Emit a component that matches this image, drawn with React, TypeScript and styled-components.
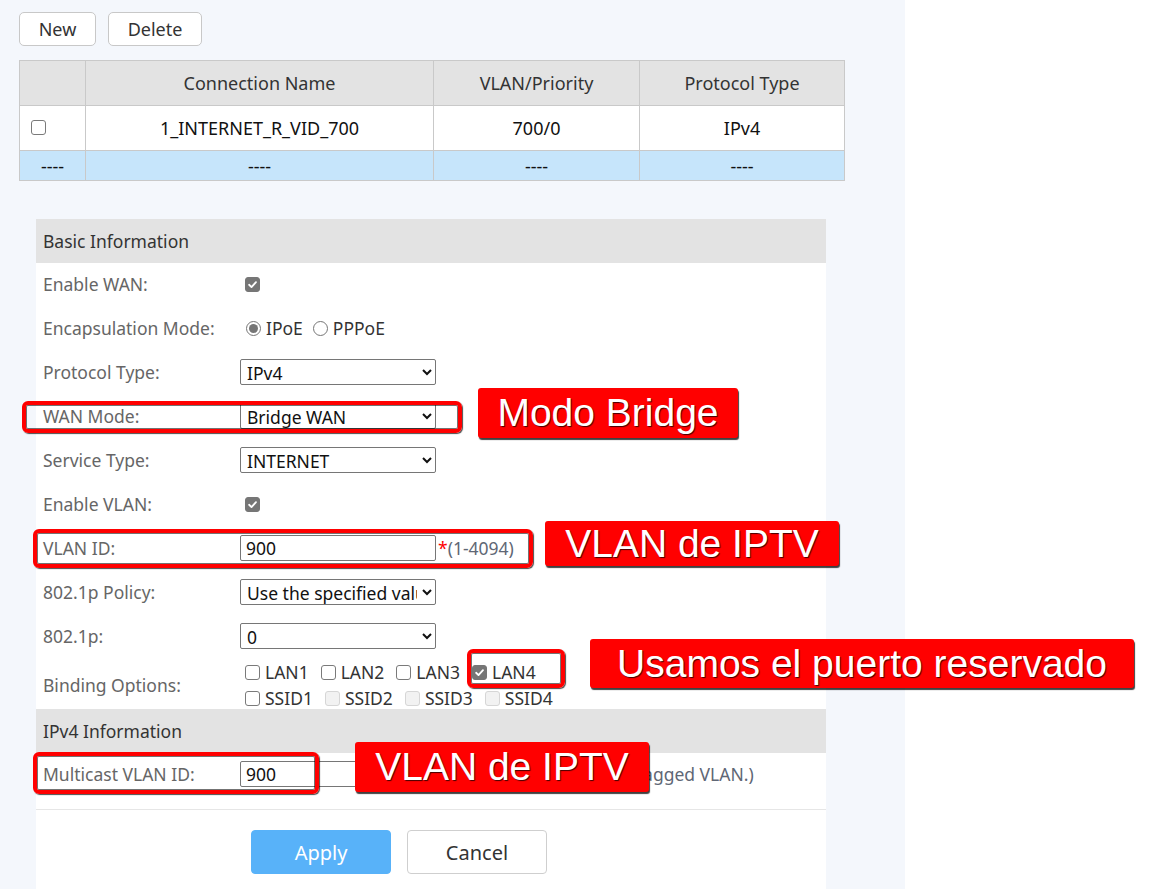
import styled, { createGlobalStyle } from 'styled-components'

const GlobalStyle = createGlobalStyle`
  html, body {
    margin: 0;
    padding: 0;
    background: #fff;
  }
  body {
    font-family: "Noto Sans", "Liberation Sans", sans-serif;
  }
  * { box-sizing: border-box; }
`

const Stage = styled.div`
  position: relative;
  width: 1171px;
  height: 889px;
  overflow: hidden;
  background: #fff;
`

const Page = styled.div`
  width: 905px;
  height: 889px;
  background: #f4f7fc;
  padding: 12px 0 0 19px;
`

const Toolbar = styled.div`
  display: flex;
  gap: 12px;
`

const ToolButton = styled.button<{ $w: number }>`
  width: ${p => p.$w}px;
  height: 34px;
  padding: 0;
  border: 1px solid #c8c8c8;
  border-radius: 5px;
  background: #fff;
  color: #333;
  font: 18px "Noto Sans", sans-serif;
`

const Grid = styled.table`
  margin-top: 14px;
  width: 825px;
  border-collapse: collapse;
  table-layout: fixed;
  font-size: 18px;
`

const HeadCell = styled.th<{ $w: number }>`
  width: ${p => p.$w}px;
  height: 45px;
  padding: 0;
  background: #e3e3e3;
  border: 1px solid #c9c9c9;
  font-weight: 400;
  color: #333;
`

const Row = styled.tr<{ $blue?: boolean }>`
  background: ${p => (p.$blue ? '#c6e5fb' : '#fff')};
  height: ${p => (p.$blue ? 30 : 45)}px;
`

const Cell = styled.td<{ $left?: boolean }>`
  padding: ${p => (p.$left ? '0 0 0 6px' : '0')};
  border: 1px solid #c9c9c9;
  text-align: ${p => (p.$left ? 'left' : 'center')};
  color: #111;
  line-height: 1;
`

const FormPanel = styled.div`
  margin: 38px 0 0 17px;
  width: 790px;
  height: 671px;
  background: #fff;
`

const SectionHeader = styled.div`
  height: 44px;
  line-height: 44px;
  padding-left: 7px;
  background: #e3e3e3;
  color: #333;
  font-size: 17.5px;
`

const FieldRow = styled.div<{ $h?: number }>`
  display: grid;
  grid-template-columns: 204px 1fr;
  align-items: center;
  height: ${p => p.$h ?? 44}px;
  font-size: 17.5px;
  padding-bottom: 2px;
`

const Label = styled.div`
  padding-left: 7px;
  color: #666;
`

const Control = styled.div`
  display: flex;
  align-items: center;
  color: #222;
`

const Select = styled.select`
  width: 196px;
  height: 26px;
  padding: 0 2px;
  border: 1px solid #767676;
  border-radius: 2px;
  background: #fff;
  color: #111;
  font: 17.5px "Noto Sans", sans-serif;
`

const TextInput = styled.input`
  width: 196px;
  height: 26px;
  padding: 0 5px;
  border: 1px solid #767676;
  border-radius: 2px;
  color: #111;
  font: 17.5px "Noto Sans", sans-serif;
`

type Mark = 'on' | 'off' | 'dim'

const CheckMark = styled.span<{ $mark: Mark }>`
  display: inline-flex;
  align-items: center;
  justify-content: center;
  flex: none;
  width: 15px;
  height: 15px;
  margin: 0 5px;
  border-radius: 3px;
  border: 1px solid ${p => (p.$mark === 'on' ? '#767676' : p.$mark === 'off' ? '#7a7a7a' : '#d6d6d6')};
  background: ${p => (p.$mark === 'on' ? '#767676' : p.$mark === 'off' ? '#fff' : '#f2f2f2')};
`

const RadioMark = styled.span<{ $on?: boolean }>`
  display: inline-flex;
  align-items: center;
  justify-content: center;
  flex: none;
  width: 15px;
  height: 15px;
  margin: 0 5px 0 6px;
  border-radius: 50%;
  border: 1px solid #767676;
  background: #fff;

  &::after {
    content: '';
    display: ${p => (p.$on ? 'block' : 'none')};
    width: 9px;
    height: 9px;
    border-radius: 50%;
    background: #767676;
  }
`

function Check({ mark }: { mark: Mark }) {
  return (
    <CheckMark $mark={mark}>
      {mark === 'on' && (
        <svg width="11" height="11" viewBox="0 0 12 12">
          <path d="M2.3 6.3 L4.9 8.8 L9.8 3.4" fill="none" stroke="#fff" strokeWidth="2" strokeLinecap="round" strokeLinejoin="round" />
        </svg>
      )}
    </CheckMark>
  )
}

const Choice = styled.span<{ $gap?: number }>`
  display: inline-flex;
  align-items: center;
  margin-right: ${p => p.$gap ?? 4}px;
  color: #333;
`

const Bindings = styled.div`
  display: flex;
  flex-direction: column;
  line-height: 26px;
`

const BindLine = styled.div`
  display: flex;
  align-items: center;
`

const Star = styled.span`
  margin-left: 2px;
  color: #f00;
`

const Hint = styled.span`
  color: #5f6775;
  white-space: nowrap;
`

const Footer = styled.div`
  display: flex;
  gap: 16px;
  margin-top: 12px;
  padding: 20px 0 0 215px;
  border-top: 1px solid #e6e6e6;
`

const ActionButton = styled.button<{ $primary?: boolean }>`
  width: 140px;
  height: 44px;
  border-radius: 4px;
  border: 1px solid ${p => (p.$primary ? '#58b2f9' : '#cfcfcf')};
  background: ${p => (p.$primary ? '#58b2f9' : '#fff')};
  color: ${p => (p.$primary ? '#fff' : '#333')};
  font: 20px "Noto Sans", sans-serif;
`

const Outline = styled.div<{ $x: number; $y: number; $w: number; $h: number }>`
  position: absolute;
  left: ${p => p.$x}px;
  top: ${p => p.$y}px;
  width: ${p => p.$w}px;
  height: ${p => p.$h}px;
  border: 4px solid #f00;
  border-radius: 6px;
  box-shadow: 1px 1px 1px rgba(0, 0, 0, 0.7), inset 0 0 0 1px rgba(0, 0, 0, 0.55);
`

const Callout = styled.div<{ $x: number; $y: number; $w: number; $h: number }>`
  position: absolute;
  left: ${p => p.$x}px;
  top: ${p => p.$y}px;
  width: ${p => p.$w}px;
  height: ${p => p.$h}px;
  display: flex;
  align-items: center;
  justify-content: center;
  background: #f00;
  border-radius: 3px;
  box-shadow: 1px 2px 1px rgba(0, 0, 0, 0.75);
  color: #fff;
  font: 39px "Liberation Sans", Arial, sans-serif;
  text-shadow: 1px 1px 1px #400;
  white-space: nowrap;
`

export default function App() {
  return (
    <Stage>
      <GlobalStyle />
      <Page>
        <Toolbar>
          <ToolButton $w={77}>New</ToolButton>
          <ToolButton $w={94}>Delete</ToolButton>
        </Toolbar>
        <Grid>
          <thead>
            <tr>
              <HeadCell $w={66}></HeadCell>
              <HeadCell $w={348}>Connection Name</HeadCell>
              <HeadCell $w={206}>VLAN/Priority</HeadCell>
              <HeadCell $w={205}>Protocol Type</HeadCell>
            </tr>
          </thead>
          <tbody>
            <Row>
              <Cell $left><Check mark="off" /></Cell>
              <Cell>1_INTERNET_R_VID_700</Cell>
              <Cell>700/0</Cell>
              <Cell>IPv4</Cell>
            </Row>
            <Row $blue>
              <Cell>----</Cell>
              <Cell>----</Cell>
              <Cell>----</Cell>
              <Cell>----</Cell>
            </Row>
          </tbody>
        </Grid>

        <FormPanel>
          <SectionHeader>Basic Information</SectionHeader>
          <FieldRow>
            <Label>Enable WAN:</Label>
            <Control><Check mark="on" /></Control>
          </FieldRow>
          <FieldRow>
            <Label>Encapsulation Mode:</Label>
            <Control>
              <Choice><RadioMark $on />IPoE</Choice>
              <Choice><RadioMark />PPPoE</Choice>
            </Control>
          </FieldRow>
          <FieldRow>
            <Label>Protocol Type:</Label>
            <Control><Select defaultValue="IPv4"><option>IPv4</option></Select></Control>
          </FieldRow>
          <FieldRow>
            <Label>WAN Mode:</Label>
            <Control><Select defaultValue="Bridge WAN"><option>Bridge WAN</option></Select></Control>
          </FieldRow>
          <FieldRow>
            <Label>Service Type:</Label>
            <Control><Select defaultValue="INTERNET"><option>INTERNET</option></Select></Control>
          </FieldRow>
          <FieldRow>
            <Label>Enable VLAN:</Label>
            <Control><Check mark="on" /></Control>
          </FieldRow>
          <FieldRow>
            <Label>VLAN ID:</Label>
            <Control>
              <TextInput defaultValue="900" />
              <Star>*</Star>
              <Hint>(1-4094)</Hint>
            </Control>
          </FieldRow>
          <FieldRow>
            <Label>802.1p Policy:</Label>
            <Control>
              <Select defaultValue="spec"><option value="spec">Use the specified value</option></Select>
            </Control>
          </FieldRow>
          <FieldRow>
            <Label>802.1p:</Label>
            <Control><Select defaultValue="0"><option>0</option></Select></Control>
          </FieldRow>
          <FieldRow $h={50}>
            <Label>Binding Options:</Label>
            <Bindings>
              <BindLine>
                <Choice $gap={7}><Check mark="off" />LAN1</Choice>
                <Choice $gap={7}><Check mark="off" />LAN2</Choice>
                <Choice $gap={7}><Check mark="off" />LAN3</Choice>
                <Choice $gap={7}><Check mark="on" />LAN4</Choice>
              </BindLine>
              <BindLine>
                <Choice $gap={7}><Check mark="off" />SSID1</Choice>
                <Choice $gap={7}><Check mark="dim" />SSID2</Choice>
                <Choice $gap={7}><Check mark="dim" />SSID3</Choice>
                <Choice $gap={7}><Check mark="dim" />SSID4</Choice>
              </BindLine>
            </Bindings>
          </FieldRow>
          <SectionHeader>IPv4 Information</SectionHeader>
          <FieldRow>
            <Label>Multicast VLAN ID:</Label>
            <Control>
              <TextInput defaultValue="900" />
              <Hint>&nbsp;(0-4094; 4095 means untagged VLAN.)</Hint>
            </Control>
          </FieldRow>
          <Footer>
            <ActionButton $primary>Apply</ActionButton>
            <ActionButton>Cancel</ActionButton>
          </Footer>
        </FormPanel>
      </Page>

      <Outline $x={22} $y={401} $w={440} $h={32} />
      <Callout $x={478} $y={388} $w={260} $h={50}>Modo Bridge</Callout>
      <Outline $x={33} $y={529} $w={500} $h={39} />
      <Callout $x={545} $y={521} $w={294} $h={45}>VLAN de IPTV</Callout>
      <Outline $x={467} $y={649} $w={98} $h={39} />
      <Callout $x={590} $y={639} $w={544} $h={49}>Usamos el puerto reservado</Callout>
      <Outline $x={33} $y={752} $w={286} $h={42} />
      <Callout $x={355} $y={742} $w={294} $h={50}>VLAN de IPTV</Callout>
    </Stage>
  )
}
